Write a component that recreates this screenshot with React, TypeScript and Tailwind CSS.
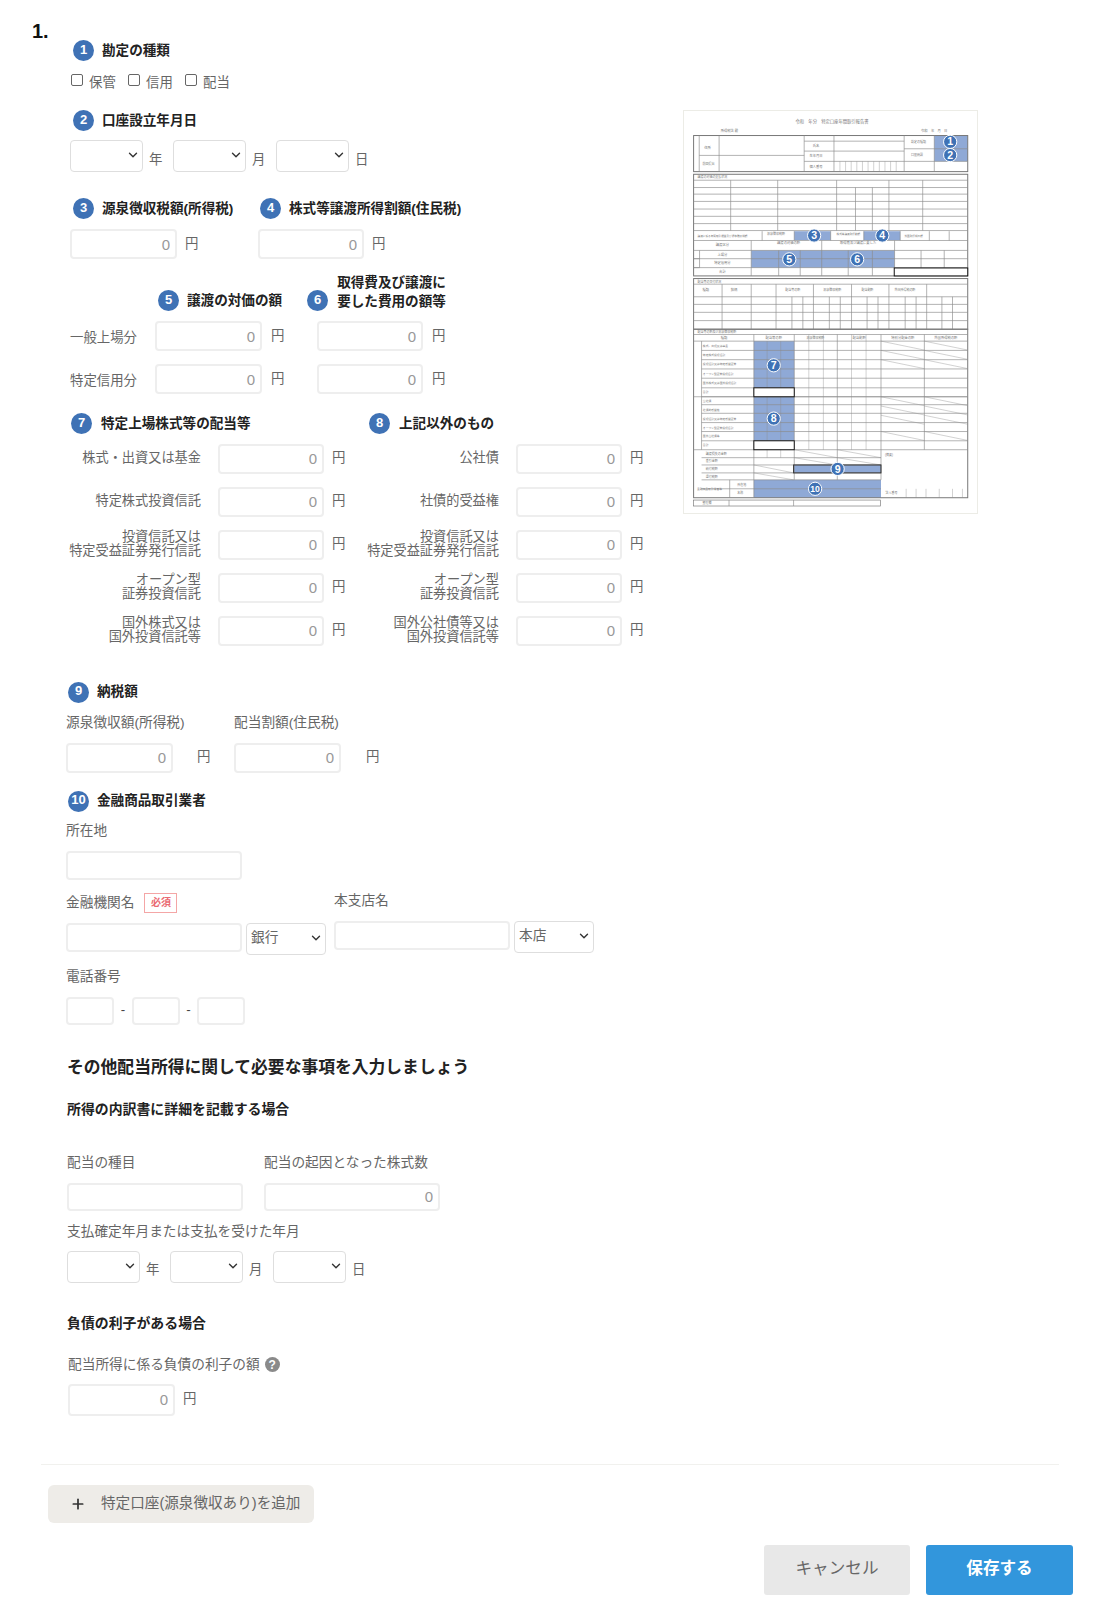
import { ChevronDown, Plus } from "lucide-react";

const FONT = "[font-family:'Liberation_Sans','Noto_Sans_CJK_JP',sans-serif]";

function Badge({ n }: { n: number }) {
  return (
    <span className="flex h-[21px] w-[21px] shrink-0 items-center justify-center rounded-full bg-[#3f72b5] pb-[2px] text-[13px] font-bold text-white">
      {n}
    </span>
  );
}

function SectionTitle({ n, title, className = "" }: { n: number; title: string; className?: string }) {
  return (
    <div className={`flex h-[21px] items-center gap-[8px] ${className}`}>
      <Badge n={n} />
      <span className="whitespace-nowrap pt-[1px] text-[13.6px] font-bold text-[#222]">{title}</span>
    </div>
  );
}

function Yen({ className = "ml-[8px]" }: { className?: string }) {
  return <span className={`w-[14px] shrink-0 text-[13.4px] text-[#666] ${className}`}>円</span>;
}

function NumInput({ className = "w-[107px] h-[30px]" }: { className?: string }) {
  return (
    <input
      readOnly
      defaultValue="0"
      className={`rounded-[4px] border-2 border-[#eeeeee] bg-white pr-[5px] text-right text-[15px] text-[#999] outline-none ${className}`}
    />
  );
}

function TextInput({ className = "" }: { className?: string }) {
  return <input readOnly className={`rounded-[4px] border-2 border-[#eeeeee] bg-white outline-none ${className}`} />;
}

function Select({ value = "", className = "w-[73px] h-[32px]" }: { value?: string; className?: string }) {
  return (
    <div className={`relative shrink-0 ${className}`}>
      <select
        defaultValue={value}
        className="h-full w-full appearance-none rounded-[4px] border border-[#dedede] bg-white pl-[4px] text-[13.7px] text-[#666] outline-none"
      >
        <option value={value}>{value}</option>
      </select>
      <ChevronDown
        size={14}
        strokeWidth={2.4}
        className="pointer-events-none absolute right-[3px] top-[8px] text-[#333]"
      />
    </div>
  );
}

function DateRow() {
  return (
    <div className="flex items-center">
      <Select />
      <span className="ml-[6px] mt-[8px] w-[24px] text-[13.4px] text-[#666]">年</span>
      <Select />
      <span className="ml-[6px] mt-[8px] w-[24px] text-[13.4px] text-[#666]">月</span>
      <Select />
      <span className="ml-[6px] mt-[8px] text-[13.4px] text-[#666]">日</span>
    </div>
  );
}

function Label({ children, className = "" }: { children: React.ReactNode; className?: string }) {
  return <div className={`h-[20px] whitespace-nowrap text-[13.7px] leading-[20px] text-[#666] ${className}`}>{children}</div>;
}

function DetailRow({ lines, labelWidth, gap }: { lines: string[]; labelWidth: string; gap: string }) {
  return (
    <div className="flex h-[30px] items-center">
      <div className={`${labelWidth} ${gap} flex shrink-0 flex-col items-end whitespace-nowrap pb-[1px] text-[13.2px] leading-[14px] text-[#666]`}>
        {lines.map((l) => (
          <div key={l}>{l}</div>
        ))}
      </div>
      <NumInput className="h-[30px] w-[106px]" />
      <Yen />
    </div>
  );
}

const LEFT_ROWS = [
  ["株式・出資又は基金"],
  ["特定株式投資信託"],
  ["投資信託又は", "特定受益証券発行信託"],
  ["オープン型", "証券投資信託"],
  ["国外株式又は", "国外投資信託等"],
];

const RIGHT_ROWS = [
  ["公社債"],
  ["社債的受益権"],
  ["投資信託又は", "特定受益証券発行信託"],
  ["オープン型", "証券投資信託"],
  ["国外公社債等又は", "国外投資信託等"],
];

// form thumbnail, drawn in 3x crop units
function Line({ d, w = 2, c = "#8c8c8c" }: { d: string; w?: number; c?: string }) {
  return <path d={d} fill="none" stroke={c} strokeWidth={w} />;
}

function Mark({ x, y, n }: { x: number; y: number; n: number }) {
  return (
    <g>
      <circle cx={x} cy={y} r={20} fill="#3f72b5" stroke="#fff" strokeWidth={3} />
      <text x={x} y={y + 11} textAnchor="middle" fontSize={n > 9 ? 26 : 32} fontWeight="700" fill="#fff">
        {n}
      </text>
    </g>
  );
}

function Tiny({ x, y, t, size = 10, anchor = "start" }: { x: number; y: number; t: string; size?: number; anchor?: "start" | "middle" }) {
  return (
    <text x={x} y={y} fontSize={size} fill="#777" textAnchor={anchor}>
      {t}
    </text>
  );
}

function hLines(ys: number[], x1: number, x2: number) {
  return ys.map((y) => `M${x1} ${y}H${x2}`).join("");
}

function vLines(xs: number[], y1: number, y2: number) {
  return xs.map((x) => `M${x} ${y1}V${y2}`).join("");
}

function FormThumb() {
  const slants = [724, 752, 780, 892, 920, 948, 997];
  return (
    <svg viewBox="69 30 885 1212" className="mt-[110px] h-[404px] w-[295px] shrink-0 border border-[#ecece6]">
      <rect x="69" y="30" width="885" height="1212" fill="#fff" />
      {/* blue areas */}
      <g fill="#8fa9d6">
        <rect x="825" y="103" width="101" height="78" />
        <rect x="402" y="392" width="110" height="27" />
        <rect x="612" y="392" width="110" height="27" />
        <rect x="272" y="450" width="433" height="52" />
        <rect x="280" y="724" width="122" height="141" />
        <rect x="280" y="892" width="122" height="133" />
        <rect x="400" y="1098" width="264" height="24" />
        <rect x="280" y="1143" width="384" height="54" />
      </g>

      <Tiny x={516} y={66} t="令和　年分　特定口座年間取引報告書" size={13} anchor="middle" />
      <Tiny x={180} y={91} t="所得税法 殿" size={10} />
      <Tiny x={785} y={91} t="令和　年　月　日" size={10} />

      {/* header box */}
      <rect x="98" y="103" width="828" height="109" fill="none" stroke="#777" strokeWidth="3" />
      <Line d={vLines([115, 175, 432, 522, 734, 825], 103, 212) + hLines([163], 115, 432) + hLines([120, 150, 181], 432, 734) + hLines([143, 181], 734, 926)} />
      <Line d={vLines([540, 557, 574, 591, 608, 625, 642, 659, 676, 693, 710], 181, 212)} w={1.2} />
      <Tiny x={130} y={145} t="住所" />
      <Tiny x={125} y={192} t="前回提出" size={9} />
      <Tiny x={458} y={139} t="氏名" />
      <Tiny x={448} y={169} t="生年月日" />
      <Tiny x={448} y={200} t="個人番号" />
      <Tiny x={755} y={127} t="勘定の種類" size={9} />
      <Tiny x={755} y={165} t="口座開設" size={9} />

      {/* transfer box */}
      <rect x="98" y="220" width="828" height="307" fill="none" stroke="#777" strokeWidth="3" />
      <Line d={hLines([238, 260, 280, 302, 325, 347, 369, 390, 420, 450, 475, 502], 98, 926)} />
      <Line d={vLines([210, 352, 530, 688, 790], 238, 390) + vLines([587, 638], 260, 390)} />
      <Line d={vLines([305, 402, 512, 612, 722, 810, 870], 392, 420) + vLines([272, 485, 705], 420, 527) + vLines([355, 420, 565, 638, 785, 855], 450, 527)} />
      <Line d={hLines([475, 502], 98, 116) + "M116 450V502"} />
      <Tiny x={110} y={230} t="譲渡の対価の支払状況" size={9} />
      <Tiny x={110} y={410} t="譲渡に係る年間取引損益及び源泉徴収税額" size={8} />
      <Tiny x={320} y={402} t="源泉徴収税額" size={9} />
      <Tiny x={530} y={402} t="株式等譲渡所得割額" size={8} />
      <Tiny x={735} y={409} t="外国所得税の額" size={8} />
      <Tiny x={185} y={438} t="譲渡区分" anchor="middle" />
      <Tiny x={385} y={432} t="譲渡の対価の額" anchor="middle" />
      <Tiny x={595} y={432} t="取得費及び譲渡に要した" anchor="middle" />
      <Tiny x={185} y={466} t="上場分" anchor="middle" />
      <Tiny x={185} y={492} t="特定信用分" anchor="middle" />
      <Tiny x={185} y={518} t="合計" anchor="middle" />
      <rect x="704" y="503" width="222" height="24" fill="#fff" stroke="#111" strokeWidth="3" />

      {/* dividend box */}
      <rect x="98" y="535" width="828" height="153" fill="none" stroke="#777" strokeWidth="3" />
      <Line d={hLines([552, 590, 613, 637, 662], 98, 926)} />
      <Line d={vLines([184, 272, 347, 460, 575, 688, 802], 552, 688) + vLines([395, 428, 508, 541, 622, 655, 737, 770, 848, 880], 590, 688)} />
      <Tiny x={110} y={547} t="配当等の交付状況" size={9} />
      <Tiny x={125} y={573} t="種類" />
      <Tiny x={210} y={573} t="銘柄" />
      <Tiny x={375} y={573} t="配当等の額" size={9} />
      <Tiny x={490} y={573} t="源泉徴収税額" size={9} />
      <Tiny x={605} y={573} t="配当割額" size={9} />
      <Tiny x={705} y={573} t="外国所得税の額" size={9} />

      {/* summary box */}
      <rect x="98" y="688" width="828" height="509" fill="none" stroke="#777" strokeWidth="3" />
      <Line d={hLines([704, 724], 98, 926)} />
      <Line d={hLines([752, 780, 808, 836, 865, 892, 916, 942, 970, 997, 1025], 122, 926)} />
      <Line d={hLines([892, 1052], 98, 926) + hLines([1076, 1098, 1122, 1143, 1170], 122, 664)} />
      <Line d={vLines([122], 724, 1052) + vLines([280], 704, 1197) + vLines([402, 532, 664], 704, 1143) + vLines([795], 704, 1052)} />
      <Line d={vLines([320, 361], 724, 1076) + vLines([446, 490, 575, 619], 704, 1052)} w={1.2} />
      <Line d={vLines([207], 1143, 1197)} />
      <Line d={slants.map((y) => `M664 ${y}L795 ${y + 27}M795 ${y}L926 ${y + 27}`).join("")} w={1.2} />
      <Line d="M402 1052L532 1076M532 1052L664 1076M402 1076L532 1098M532 1076L664 1098M280 1098L400 1122M280 1122L400 1143" w={1.2} />
      <Line d={vLines([740, 770, 800, 840, 880, 910], 1170, 1197)} w={1.2} />
      <Tiny x={110} y={698} t="配当等の額及び源泉徴収税額" size={9} />
      <Tiny x={190} y={718} t="種類" anchor="middle" />
      <Tiny x={340} y={718} t="配当等の額" anchor="middle" />
      <Tiny x={466} y={718} t="源泉徴収税額" anchor="middle" size={9} />
      <Tiny x={598} y={718} t="配当割額" anchor="middle" />
      <Tiny x={730} y={718} t="特別分配金の額" anchor="middle" />
      <Tiny x={860} y={718} t="外国所得税の額" anchor="middle" />
      {["株式、出資又は基金", "特定株式投資信託", "投資信託又は特定受益証券", "オープン型証券投資信託", "国外株式又は国外投資信託", "合計"].map((t, i) => (
        <Tiny key={t} x={126} y={741 + i * 28} t={t} size={8.5} />
      ))}
      {["公社債", "社債的受益権", "投資信託又は特定受益証券", "オープン型証券投資信託", "国外公社債等", "合計"].map((t, i) => (
        <Tiny key={t} x={126} y={907 + i * 27} t={t} size={8.5} />
      ))}
      <Tiny x={135} y={1067} t="譲渡損失の金額" size={9} />
      <Tiny x={135} y={1090} t="差引金額" size={9} />
      <Tiny x={135} y={1114} t="納付税額" size={9} />
      <Tiny x={135} y={1137} t="還付税額" size={9} />
      <Tiny x={108} y={1175} t="金融商品取引業者等" size={8.5} />
      <Tiny x={230} y={1162} t="所在地" size={9} />
      <Tiny x={230} y={1187} t="名称" size={9} />
      <Tiny x={676} y={1070} t="(摘要)" size={9} />
      <Tiny x={678} y={1187} t="法人番号" size={9} />
      <rect x="280" y="865" width="122" height="27" fill="#fff" stroke="#111" strokeWidth="3" />
      <rect x="280" y="1025" width="122" height="27" fill="#fff" stroke="#111" strokeWidth="3" />
      <rect x="400" y="1098" width="264" height="24" fill="none" stroke="#333" strokeWidth="3" />

      <rect x="98" y="1204" width="564" height="18" fill="none" stroke="#777" strokeWidth="2" />
      <Line d={vLines([205, 400], 1204, 1222)} />
      <Tiny x={125} y={1217} t="整理欄" size={9} />

      <Mark x={873} y={122} n={1} />
      <Mark x={873} y={162} n={2} />
      <Mark x={462} y={405} n={3} />
      <Mark x={668} y={405} n={4} />
      <Mark x={387} y={477} n={5} />
      <Mark x={592} y={477} n={6} />
      <Mark x={340} y={797} n={7} />
      <Mark x={340} y={958} n={8} />
      <Mark x={533} y={1110} n={9} />
      <Mark x={465} y={1170} n={10} />
    </svg>
  );
}

export default function App() {
  return (
    <div className={`h-[1600px] w-[1093px] overflow-hidden bg-white ${FONT}`}>
      <div className="flex items-start">
        <div className="flex w-[683px] shrink-0 pl-[32px] pt-[19px]">
          <div className="w-[38px] shrink-0 text-[20px] font-bold leading-[24px] text-[#111]">1.</div>

          <div className="mt-[21px] flex-1">
            <SectionTitle n={1} title="勘定の種類" className="pl-[3px]" />
            <div className="mt-[12px] flex h-[20px] items-center text-[13.4px] text-[#666]">
              {["保管", "信用", "配当"].map((t) => (
                <label key={t} className="flex w-[57px] items-center">
                  <input type="checkbox" className="mb-[6px] ml-[1px] h-[12px] w-[12px] appearance-none rounded-[2px] border border-[#666] bg-white" />
                  <span className="ml-[6px]">{t}</span>
                </label>
              ))}
            </div>

            <SectionTitle n={2} title="口座設立年月日" className="mt-[17px] pl-[3px]" />
            <div className="mt-[9px]">
              <DateRow />
            </div>

            <div className="mt-[26px] flex">
              <div className="w-[188px] shrink-0">
                <SectionTitle n={3} title="源泉徴収税額(所得税)" className="pl-[3px]" />
                <div className="mt-[10px] flex items-center">
                  <NumInput />
                  <Yen />
                </div>
              </div>
              <div>
                <SectionTitle n={4} title="株式等譲渡所得割額(住民税)" className="pl-[2px]" />
                <div className="mt-[10px] flex items-center">
                  <NumInput className="h-[30px] w-[106px]" />
                  <Yen />
                </div>
              </div>
            </div>

            <div className="mt-[14px] flex h-[38px] items-end pl-[88px]">
              <SectionTitle n={5} title="譲渡の対価の額" />
              <div className="ml-[25px] flex items-end gap-[9px]">
                <Badge n={6} />
                <div className="whitespace-nowrap text-[13.6px] font-bold leading-[19px] text-[#222]">
                  取得費及び譲渡に
                  <br />
                  要した費用の額等
                </div>
              </div>
            </div>

            <div className="mt-[10px] flex flex-col gap-[13px]">
              {["一般上場分", "特定信用分"].map((t) => (
                <div key={t} className="flex h-[30px] items-center">
                  <span className="mt-[4px] w-[85px] shrink-0 text-[13.4px] text-[#666]">{t}</span>
                  <NumInput />
                  <Yen className="ml-[9px]" />
                  <NumInput className="ml-[32px] h-[30px] w-[106px]" />
                  <Yen className="ml-[9px]" />
                </div>
              ))}
            </div>

            <div className="mt-[19px] flex">
              <div className="w-[292px] shrink-0">
                <SectionTitle n={7} title="特定上場株式等の配当等" className="gap-[9px] pl-[1px]" />
                <div className="mt-[9.5px] flex flex-col gap-[13px]">
                  {LEFT_ROWS.map((r) => (
                    <DetailRow key={r.join()} lines={r} labelWidth="w-[131px]" gap="mr-[17px]" />
                  ))}
                </div>
              </div>
              <div>
                <SectionTitle n={8} title="上記以外のもの" className="gap-[9px] pl-[7px]" />
                <div className="mt-[9.5px] flex flex-col gap-[13px]">
                  {RIGHT_ROWS.map((r) => (
                    <DetailRow key={r.join()} lines={r} labelWidth="w-[137px]" gap="mr-[17px]" />
                  ))}
                </div>
              </div>
            </div>
          </div>
        </div>
        <FormThumb />
      </div>

      <div className="pl-[66px]">
        <SectionTitle n={9} title="納税額" className="mt-[36px] pl-[2px]" />
        <div className="mt-[10px] flex">
          <div className="w-[168px]">
            <Label>源泉徴収額(所得税)</Label>
            <div className="mt-[10px] flex items-center">
              <NumInput />
              <Yen className="ml-[24px]" />
            </div>
          </div>
          <div>
            <Label>配当割額(住民税)</Label>
            <div className="mt-[10px] flex items-center">
              <NumInput />
              <Yen className="ml-[25px]" />
            </div>
          </div>
        </div>

        <SectionTitle n={10} title="金融商品取引業者" className="mt-[18px] pl-[2px]" />
        <Label className="mt-[9px]">所在地</Label>
        <TextInput className="mt-[10px] block h-[29px] w-[176px]" />

        <div className="mt-[11px] flex items-start">
          <div className="w-[268px] shrink-0 pt-[2px]">
            <div className="flex h-[20px] items-center">
              <Label>金融機関名</Label>
              <span className="ml-[10px] flex h-[20px] w-[33px] items-center justify-center border border-[#f4a6a6] text-[10px] font-bold text-[#ea6a72]">
                必須
              </span>
            </div>
            <div className="mt-[10px] flex items-start">
              <TextInput className="h-[29px] w-[176px]" />
              <Select value="銀行" className="ml-[4px] h-[32px] w-[80px]" />
            </div>
          </div>
          <div>
            <Label>本支店名</Label>
            <div className="mt-[10px] flex items-start">
              <TextInput className="h-[29px] w-[176px]" />
              <Select value="本店" className="ml-[4px] h-[32px] w-[80px]" />
            </div>
          </div>
        </div>

        <Label className="mt-[12px]">電話番号</Label>
        <div className="mt-[10px] flex h-[28px] items-center text-[13.4px] text-[#444]">
          <TextInput className="h-[28px] w-[48px]" />
          <span className="w-[18px] text-center">-</span>
          <TextInput className="h-[28px] w-[48px]" />
          <span className="w-[17px] text-center">-</span>
          <TextInput className="h-[28px] w-[48px]" />
        </div>

        <div className="pl-[1px]">
          <h2 className="mt-[31px] text-[16.8px] font-bold leading-[24px] text-[#222]">
            その他配当所得に関して必要な事項を入力しましょう
          </h2>
          <h3 className="mt-[19px] text-[13.9px] font-bold leading-[20px] text-[#222]">所得の内訳書に詳細を記載する場合</h3>

          <div className="mt-[34px] flex">
            <div className="w-[197px] shrink-0">
              <Label>配当の種目</Label>
              <TextInput className="mt-[10px] block h-[28px] w-[176px]" />
            </div>
            <div>
              <Label>配当の起因となった株式数</Label>
              <NumInput className="mt-[10px] block h-[28px] w-[176px]" />
            </div>
          </div>

          <Label className="mt-[11px]">支払確定年月または支払を受けた年月</Label>
          <div className="mt-[9px]">
            <DateRow />
          </div>

          <h3 className="mt-[30px] text-[13.9px] font-bold leading-[20px] text-[#222]">負債の利子がある場合</h3>

          <div className="mt-[22px] flex h-[20px] items-center pl-[1px]">
            <Label>配当所得に係る負債の利子の額</Label>
            <span className="ml-[5px] flex h-[15px] w-[15px] items-center justify-center rounded-full bg-[#8a8a8a] text-[12px] font-bold text-white">
              ?
            </span>
          </div>
          <div className="ml-[1px] mt-[9px] flex items-center">
            <NumInput className="h-[32px] w-[107px]" />
            <Yen className="ml-[8px]" />
          </div>
        </div>
      </div>

      <div className="ml-[41px] mr-[34px] mt-[48px] border-t border-[#f1f1ee]" />

      <button className="ml-[48px] mt-[20px] flex h-[38px] w-[266px] items-center rounded-[6px] bg-[#eeece8] pl-[22px] text-[14.6px] text-[#666]">
        <Plus size={16} strokeWidth={2.6} className="text-[#333]" />
        <span className="ml-[15px]">特定口座(源泉徴収あり)を追加</span>
      </button>

      <div className="mr-[20px] mt-[22px] flex justify-end gap-[16px]">
        <button className="h-[50px] w-[146px] rounded-[3px] bg-[#e8e8e8] text-[16.6px] text-[#666]">キャンセル</button>
        <button className="h-[50px] w-[147px] rounded-[3px] bg-[#3296dc] text-[16.6px] font-bold text-white">保存する</button>
      </div>
    </div>
  );
}
